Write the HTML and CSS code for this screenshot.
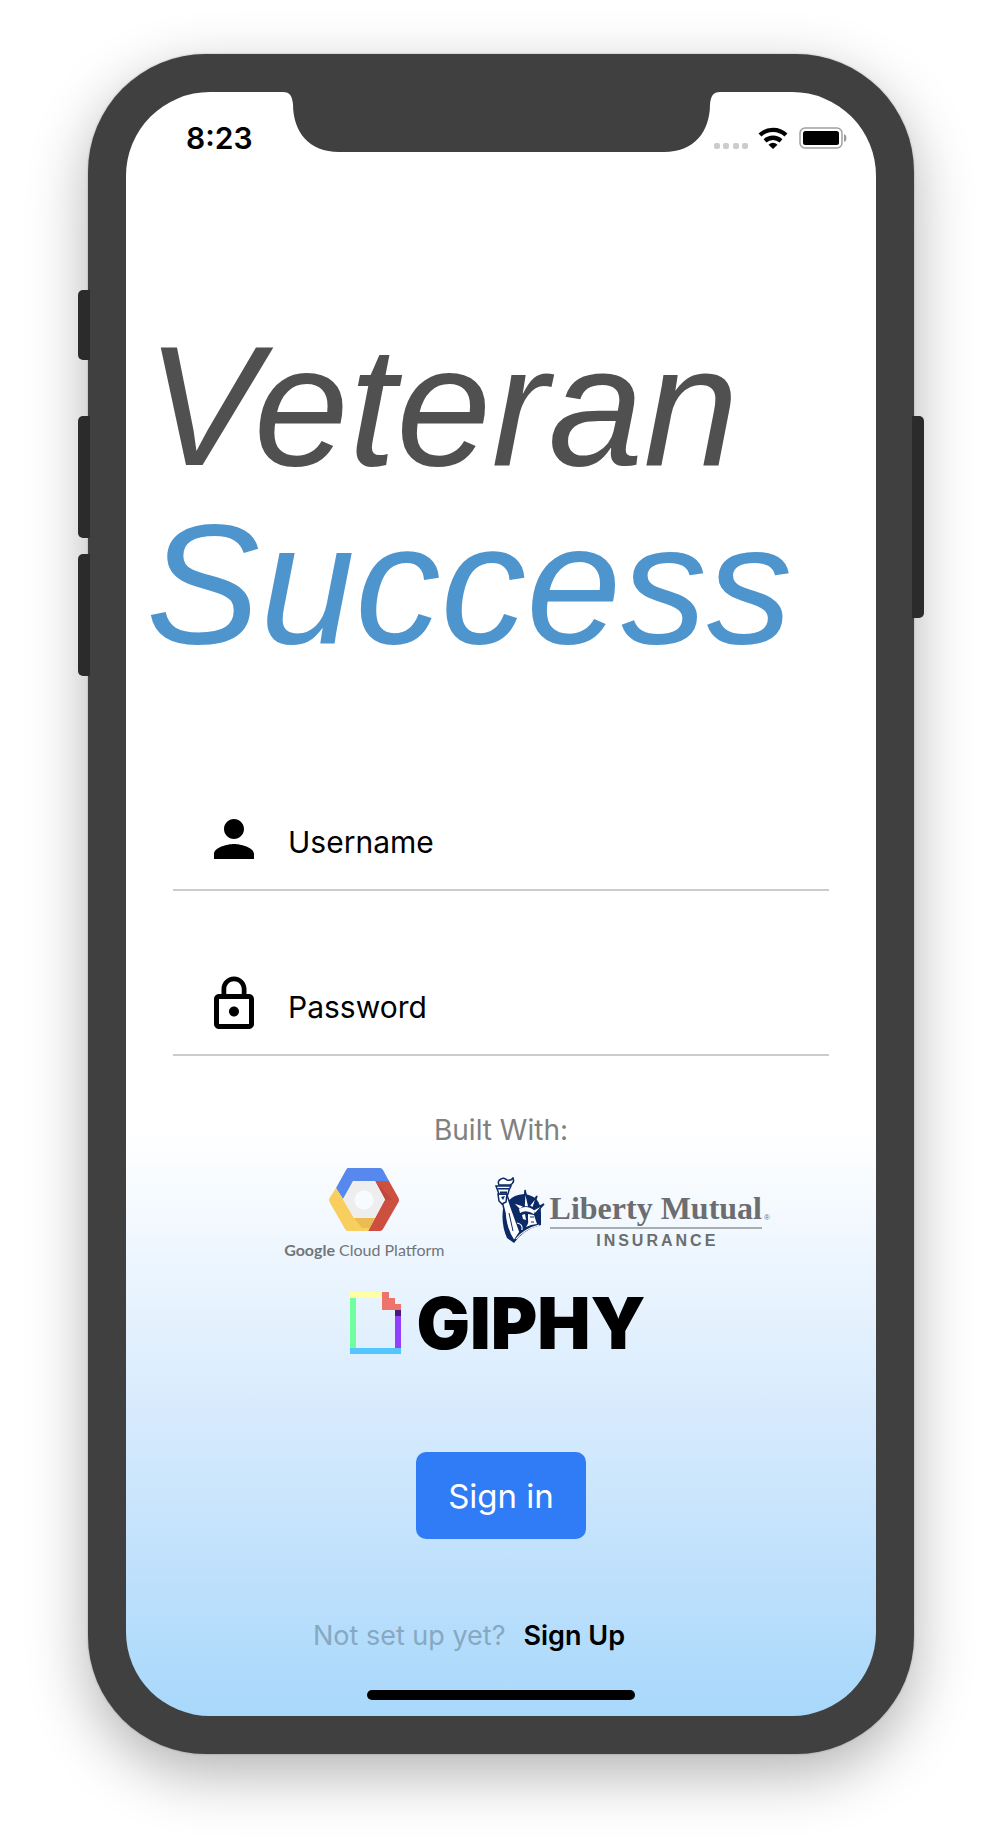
FILE: index.html
```html
<!DOCTYPE html>
<html lang="en">
<head>
<meta charset="utf-8">
<meta name="viewport" content="width=device-width, initial-scale=1">
<title>Veteran Success</title>
<link rel="stylesheet" href="styles.css">
</head>
<body>
<div class="phone">
  <span class="key key-mute"></span>
  <span class="key key-up"></span>
  <span class="key key-down"></span>
  <span class="key key-power"></span>
  <main class="screen">
    <header class="status">
      <time class="clock">8:23</time>
      <svg class="notch" width="437" height="60" viewBox="0 0 437 60" aria-hidden="true"><path fill="#404040" d="M0 0C7 0 9 4 10 12C10 40 26 60 56 60H381C411 60 427 40 427 12C428 4 430 0 437 0Z"/></svg>
      <div class="indicators">
        <svg width="36" height="22" viewBox="0 0 36 22" aria-hidden="true"><g fill="#ccc"><rect x="2" y="16" width="6" height="6" rx="2"/><rect x="11" y="16" width="6" height="6" rx="2"/><rect x="21" y="16" width="6" height="6" rx="2"/><rect x="30" y="16" width="6" height="6" rx="2"/></g></svg>
        <svg width="30" height="22" viewBox="0 0 30 22" aria-hidden="true"><g fill="none" stroke="#000" stroke-width="4.300"><path d="M2 8A19 19 0 0 1 28 8"/><path d="M7 13.800A12 12 0 0 1 23 13.800"/></g><path d="M10.500 17.800Q15 13.800 19.500 17.800L15 22Z"/></svg>
        <svg width="50" height="22" viewBox="0 0 50 22" aria-hidden="true"><rect x="2" y="1" width="42" height="20" rx="5" fill="none" stroke="#a0a0a0" stroke-width="1.500"/><rect x="5" y="4" width="36" height="14" rx="2.500"/><path d="M46 7Q48.500 8 48.500 11T46 15Z" fill="#999"/></svg>
      </div>
    </header>
    <h1 class="title"><span class="veteran">Veteran</span><span class="success">Success</span></h1>
    <form class="login">
      <label class="field">
        <svg width="60" height="60" viewBox="0 0 24 24" aria-hidden="true"><path d="M12 12c2.210 0 4-1.790 4-4s-1.790-4-4-4-4 1.790-4 4 1.790 4 4 4zm0 2c-2.670 0-8 1.340-8 4v2h16v-2c0-2.660-5.330-4-8-4z"/></svg>
        <input type="text" placeholder="Username" aria-label="Username">
      </label>
      <label class="field">
        <svg width="60" height="60" viewBox="0 0 24 24" aria-hidden="true"><path d="M12 17c1.100 0 2-.9 2-2s-.9-2-2-2-2 .9-2 2 .9 2 2 2zm6-9h-1V6c0-2.760-2.240-5-5-5S7 3.240 7 6v2H6c-1.100 0-2 .9-2 2v10c0 1.100.9 2 2 2h12c1.100 0 2-.9 2-2V10c0-1.100-.9-2-2-2zM8.900 6c0-1.710 1.390-3.100 3.100-3.100s3.100 1.390 3.100 3.100v2H8.900V6zM18 20H6V10h12v10z"/></svg>
        <input type="password" placeholder="Password" aria-label="Password">
      </label>
      <p class="built">Built With:</p>
      <div class="partners">
        <div class="gcp">
          <svg width="70" height="63" viewBox="0 0 70 63" aria-hidden="true">
            <path fill="#5688ee" d="M19 0H51Q53 0 54 2L60 13H24L14 31L7 20L17 2Q18 0 19 0Z"/>
            <path fill="#cc4f40" d="M46 13H60L69.500 30Q70.500 32 69.500 34L54 61Q53 63 51 63H39L56 31.500Z"/>
            <path fill="#f8cf5f" d="M7 20L14 31L25 50H46L39 63H19Q17 63 16 61L.5 34Q-.5 32 .5 30Z"/>
            <path fill="#dfa94a" d="M25 50H46L41 60L33 60Z" opacity=".5"/>
            <path fill="#ad4236" d="M46 13L56 31.500L63 32Z" opacity=".5"/>
            <path fill="#eee" d="M25 13H46L56 31.500L46 50H25L14 31.500Z"/>
            <circle cx="35" cy="32" r="9.500" fill="#f6fbff"/>
          </svg>
          <span class="gcp-name"><b>Google</b> Cloud Platform</span>
        </div>
        <div class="liberty">
          <svg width="50" height="66" viewBox="0 0 50 66" aria-hidden="true">
            <path fill="#0c2a66" d="M8 32Q14 18 29 17Q46 19 46 36V48Q29 52 19 66L12 61Q6 48 8 32Z"/>
            <g fill="#fff" stroke="#0c2a66" stroke-width="1.500">
              <path d="M25 33L17 25L29 29Z"/><path d="M29 30L30 13L34 30Z"/><path d="M34 29L42 19L38 31Z"/><path d="M38 33L49 27L40 37Z"/>
              <path d="M6 20L12 18L16 30L25 55L19 64Q11 52 10 36Z"/>
              <path d="M3 17H12L11 25L7 27L4 24Z"/>
              <path d="M1 9H16L14 13L13 17H4Z"/>
              <path d="M4 8Q2 4 6 2Q9 0 12 3Q16 4 18 1Q20 6 15 8Z"/>
            </g>
            <path fill="#0c2a66" d="M3 11H14V12.500H3ZM5 14.500H12V16.500H5ZM6 20L10 19L8 23Z"/>
            <path fill="#fff" d="M24 32Q32 27 40 34L39 37Q31 32 25 36ZM27 38L30 37L31 43L28 42ZM33 37L39 38L42 47L36 48L31 50Q34 46 33 43Z"/>
            <path fill="none" stroke="#fff" stroke-width="1.200" d="M22 46Q28 47 27 53M21 62Q29 52 44 48"/>
            <path fill="none" stroke="#0c2a66" d="M14 36L18 54M35 40H39M36 45H39"/>
          </svg>
          <div class="liberty-words"><span class="liberty-name">Liberty Mutual</span><span class="liberty-sub">INSURANCE</span></div>
          <span class="liberty-mark">®</span>
        </div>
      </div>
      <div class="giphy">
        <svg width="51" height="62" viewBox="0 0 51 62" aria-hidden="true"><path fill="#ffffa6" d="M0 0H32V6H0Z"/><path fill="#6fff9f" d="M0 6H6V56H0Z"/><path fill="#53c7fd" d="M0 56H51V62H0Z"/><path fill="#9140fb" d="M45 24H51V56H45Z"/><path fill="#4a1c79" d="M45 18H51V24H45Z"/><path fill="#ef736d" d="M32 0H39V6H45V12H51V18H32Z"/></svg>
        <span>GIPHY</span>
      </div>
      <button class="signin" type="submit">Sign in</button>
      <p class="signup"><span>Not set up yet?</span><a href="#">Sign Up</a></p>
    </form>
    <div class="home"></div>
  </main>
</div>
</body>
</html>
```
FILE: styles.css
```css
* { box-sizing: border-box; }
body { margin: 0; padding: 54px 88px 86px; background: #fff; font-family: Inter, "Liberation Sans", sans-serif; color: #000; }
.phone { position: relative; padding: 38px; border-radius: 118px; background: #404040; box-shadow: 0 0 2px rgba(0,0,0,.3), 0 20px 60px rgba(0,0,0,.3); }
.key { position: absolute; width: 12px; background: #2b2b2b; border-radius: 5px 0 0 5px; left: -10px; }
.key-mute { top: 236px; height: 70px; }
.key-up { top: 362px; height: 122px; }
.key-down { top: 500px; height: 122px; }
.key-power { top: 362px; height: 202px; left: auto; right: -10px; border-radius: 0 5px 5px 0; }
.screen { display: flex; flex-direction: column; padding-bottom: 16px; border-radius: 84px; overflow: hidden; background: linear-gradient(#fff 0, #fff 1040px, #d4e9fd 1340px, #a8d8fb 100%); }
.status { display: grid; grid-template-columns: 1fr 437px 1fr; }
.clock { padding: 32px 30px 0 0; line-height: 28px; font-size: 30px; font-weight: 600; text-align: right; }
.indicators { display: flex; align-items: flex-start; gap: 10px; margin-left: -8px; padding-top: 35px; }
.title { margin: 165px 20px 0; font: italic 400 171px/178px "Liberation Sans", sans-serif; }
.title span { display: block; }
.veteran { color: #505050; }
.success { color: #4e94cd; }
.login { display: flex; flex-direction: column; align-items: center; padding: 136px 47px 0; }
.field { display: flex; width: 100%; height: 82px; padding-left: 31px; gap: 24px; border-bottom: 2px solid #ccc; margin-bottom: 83px; }
.field svg { flex: none; }
.field input { flex: 1; min-width: 0; height: 66px; padding: 0; border: 0; outline: 0; background: none; font: 400 30px Inter, sans-serif; }
.field input::placeholder { color: #000; opacity: 1; }
.field + .built { margin: -26px 0 0; }
.built { font-size: 28px; line-height: 34px; color: #808080; }
.partners { display: flex; gap: 50px; margin-top: 21px; padding-left: 52px; }
.gcp { display: flex; flex-direction: column; align-items: center; gap: 6px; }
.gcp-name { font: 400 16px/26px Lato, sans-serif; color: #70757a; }
.liberty { display: flex; gap: 5px; padding-top: 9px; }
.liberty-words { display: flex; flex-direction: column; align-items: center; padding-top: 12px; }
.liberty-name { font: 700 32px/38px "Liberation Serif", serif; color: #6b6d70; border-bottom: 2px solid #aaadb0; }
.liberty-mark { margin: 35px 0 0 -3px; font: 400 8px/12px "Liberation Sans", sans-serif; color: #6b6d70; }
.liberty-sub { padding-left: 3px; font: 700 16px/24px "Liberation Sans", sans-serif; letter-spacing: 3px; color: #6b6d70; }
.giphy { display: flex; gap: 15px; margin-top: 29px; padding-right: 6px; font-size: 71px; line-height: 62px; font-weight: 900; }
.signin { width: 170px; height: 87px; margin-top: 98px; border: 0; border-radius: 10px; background: #307bf6; color: #fff; font: 400 33px Inter, sans-serif; }
.signup { display: flex; gap: 18px; margin: 80px 0 0; padding-right: 64px; font-size: 27px; line-height: 34px; color: #87a8c2; }
.signup a { color: #000; font-weight: 600; text-decoration: none; }
.home { width: 268px; height: 10px; margin: 37px auto 0; border-radius: 5px; background: #000; }
```
